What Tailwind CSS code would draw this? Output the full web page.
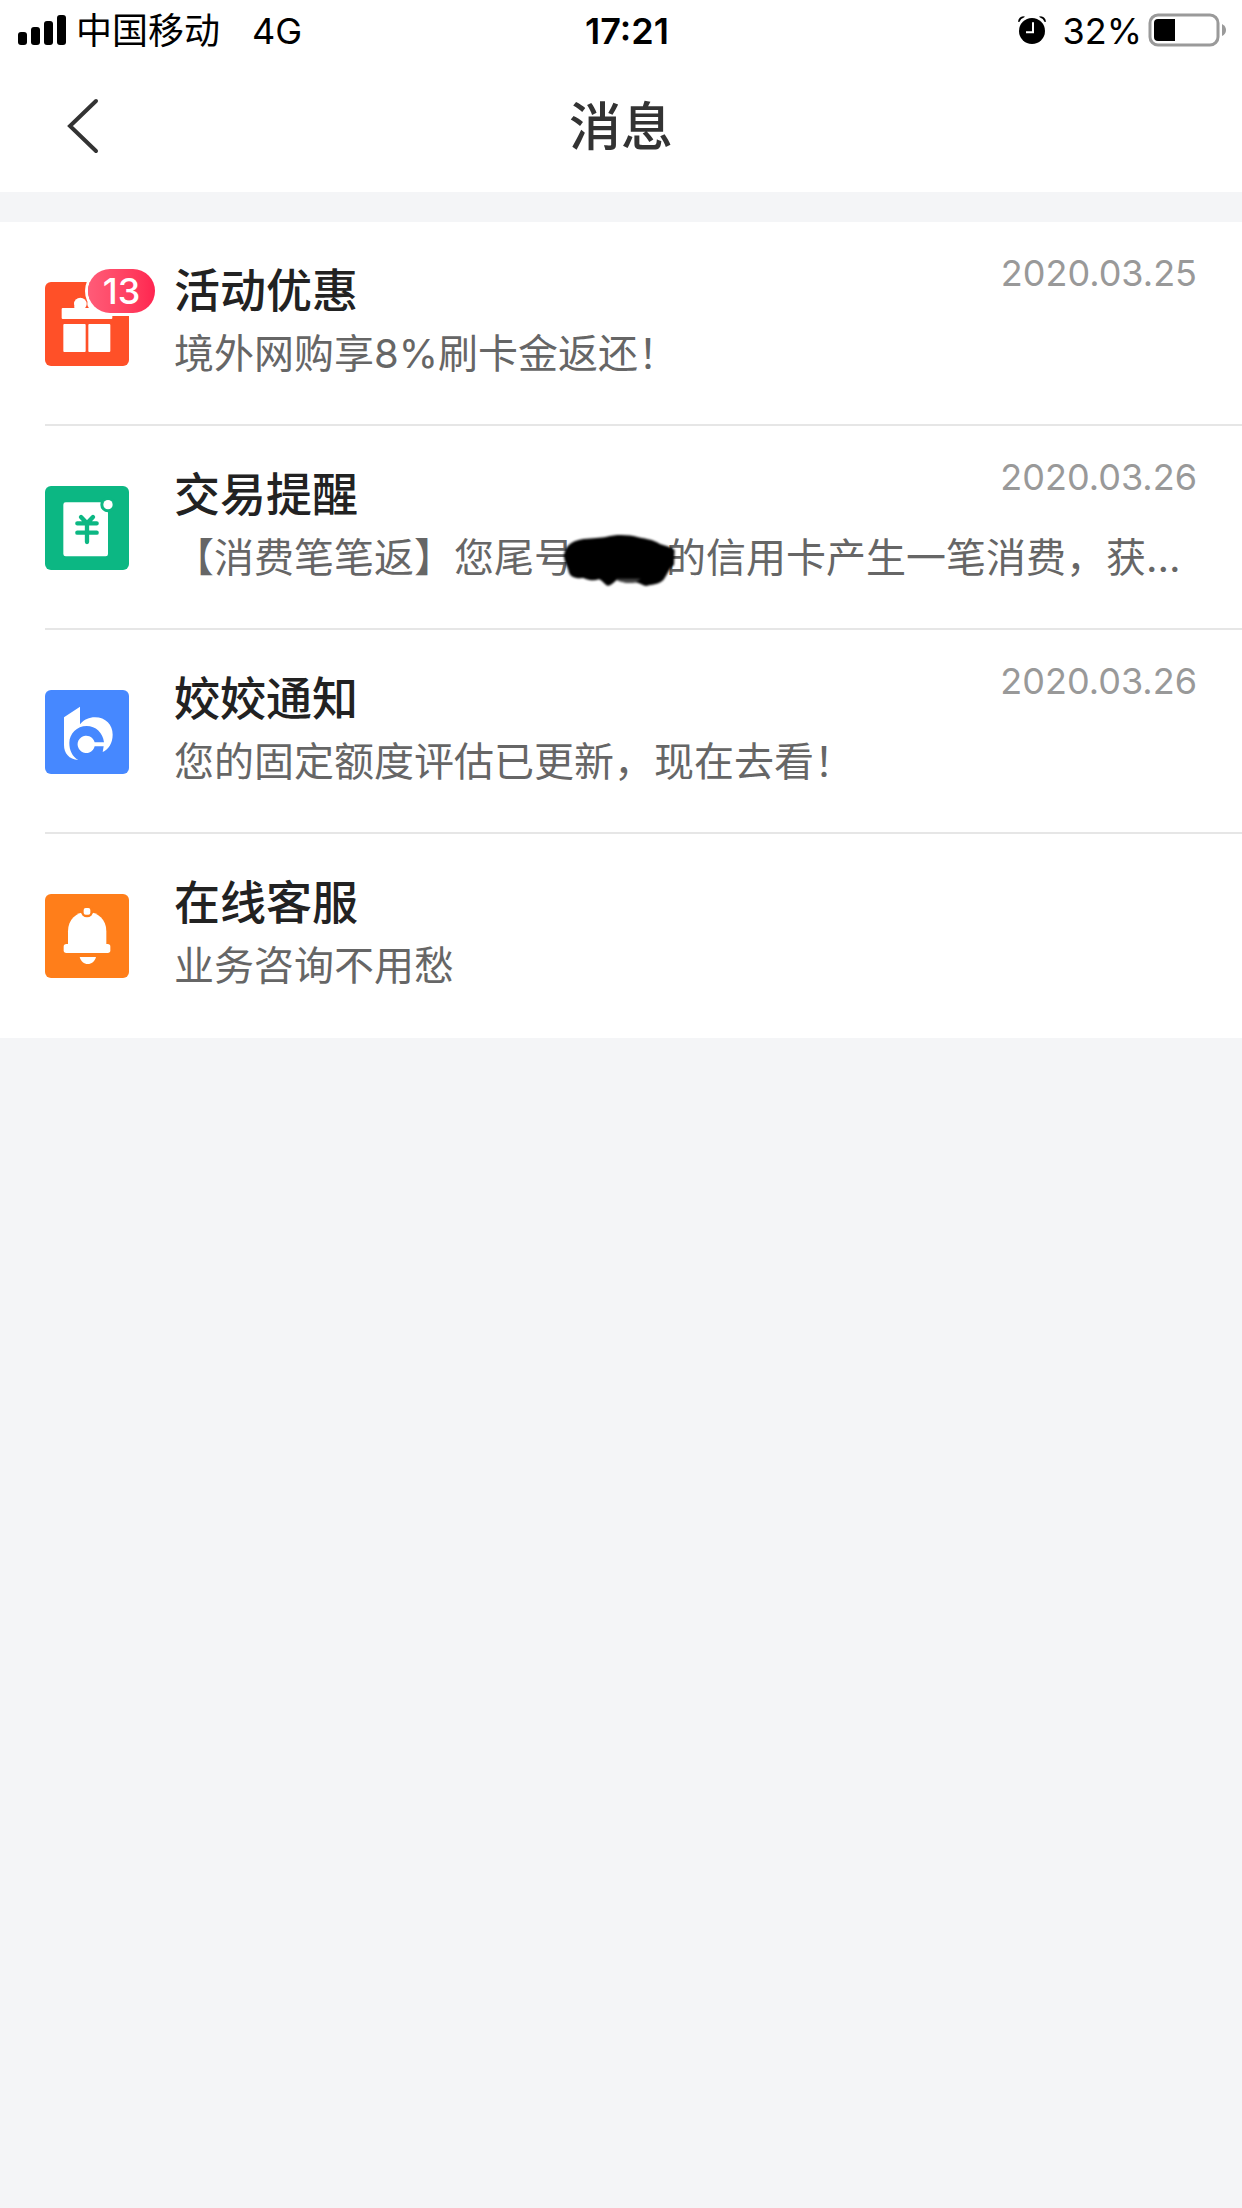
<!DOCTYPE html>
<html lang="zh-CN">
<head>
  <meta charset="UTF-8">
  <meta name="viewport" content="width=device-width, initial-scale=1.0">
  <title>消息</title>
  <script src="https://cdn.jsdelivr.net/npm/@tailwindcss/browser@4"></script>
</head>
<body class="bg-[#f4f5f7] min-h-screen font-['Inter','Noto_Sans_CJK_SC',sans-serif]">

  <!-- Status bar -->
  <div class="flex items-center h-15 bg-white pl-[18px] pr-[14px] text-4xl text-black">
    <div class="flex-1 flex items-center">
      <svg class="w-12 h-[30px] mr-[10px]" viewBox="0 0 48 30">
        <rect x="0" y="17" width="9" height="13" rx="3" />
        <rect x="13" y="12" width="9" height="18" rx="3" />
        <rect x="26" y="6" width="9" height="24" rx="3" />
        <rect x="39" y="0" width="9" height="30" rx="3" />
      </svg>
      <span class="pt-0.5">中国移动</span>
      <span class="ml-8 pt-0.5">4G</span>
    </div>
    <div class="pl-2 pt-0.5 font-semibold">17:21</div>
    <div class="flex-1 flex items-center justify-end">
      <svg class="w-7 h-7" viewBox="0 0 84 84">
        <circle cx="42" cy="45" r="39" />
        <path d="M0 17Q2 1 20 1L19 4Q8 8 4 18ZM84 17Q82 1 64 1L65 4Q76 8 80 18Z" />
        <path d="M45 19V49H24" fill="none" stroke="#fff" stroke-width="6" />
      </svg>
      <span class="ml-4 mr-1.5 pt-0.5">32%</span>
      <svg class="w-20 h-[34px]" viewBox="0 0 80 34">
        <rect x="2" y="2" width="68" height="30" rx="8" fill="#fff" stroke="#9a9a9a" stroke-width="3" />
        <path d="M27 6V28H10Q6 28 6 24V10Q6 6 10 6Z" />
        <path d="M74 11Q78 13 78 17Q78 21 74 23Z" fill="#9a9a9a" />
      </svg>
    </div>
  </div>

  <!-- Header -->
  <header class="grid grid-cols-3 items-center h-33 bg-white px-[60px]">
    <button type="button" aria-label="返回" class="w-12 h-15">
      <svg class="w-12 h-15" viewBox="0 0 48 60" fill="none" stroke="#333" stroke-width="4" stroke-linecap="round">
        <path d="M36 5L10 30L36 55" />
      </svg>
    </button>
    <h1 class="pt-1 text-center text-[52px] font-medium text-[#333]">消息</h1>
  </header>

  <!-- Message list -->
  <ul class="mt-[30px] bg-white pl-[45px]">
    <li class="border-b-2 border-[#e6e6e6]">
      <a href="#" class="flex items-start h-[202px] pt-9 pr-[45px]">
        <div class="relative shrink-0 mt-6 mr-[45px]">
          <svg class="w-21 h-21 rounded-md bg-[#ff5028]" viewBox="0 0 252 252" fill="#fff">
            <circle cx="106" cy="66" r="19" />
            <circle cx="146" cy="66" r="19" />
            <path d="M88 72L126 82L164 72V86H88Z" />
            <rect x="50" y="78" width="152" height="33" rx="3" />
            <rect x="55" y="126" width="67" height="84" rx="3" />
            <rect x="130" y="126" width="66" height="84" rx="3" />
          </svg>
          <span class="absolute left-[43px] -top-[13px] w-[67px] h-11 rounded-full ring-3 ring-white bg-linear-to-r from-[#ff5b78] to-[#ff2450] text-center text-4xl leading-11 font-medium text-white">13</span>
        </div>
        <div class="flex-1 min-w-0">
          <div class="flex items-start justify-between">
            <h2 class="text-[46px] leading-16 font-medium text-[#222]">活动优惠</h2>
            <time class="text-4xl leading-[30px] text-[#999]">2020.03.25</time>
          </div>
          <p class="text-[40px] leading-16 text-[#666] whitespace-nowrap overflow-hidden">境外网购享8%刷卡金返还！</p>
        </div>
      </a>
    </li>

    <li class="border-b-2 border-[#e6e6e6]">
      <a href="#" class="flex items-start h-[202px] pt-9 pr-[45px]">
        <div class="shrink-0 mt-6 mr-[45px]">
          <svg class="w-21 h-21 rounded-md bg-[#0cb783]" viewBox="0 0 252 252">
            <rect x="55" y="49" width="134" height="162" rx="7" fill="#fff" />
            <circle cx="189" cy="56" r="23" fill="#0cb783" />
            <circle cx="189" cy="56" r="14" fill="#fff" />
            <path d="M108 93L126 112L144 93M97 112H155M97 140H155M126 112V168" fill="none" stroke="#0cb783" stroke-width="13" stroke-linecap="round" />
          </svg>
        </div>
        <div class="flex-1 min-w-0">
          <div class="flex items-start justify-between">
            <h2 class="text-[46px] leading-16 font-medium text-[#222]">交易提醒</h2>
            <time class="text-4xl leading-[30px] text-[#999]">2020.03.26</time>
          </div>
          <p class="flex items-center text-[40px] leading-16 text-[#666] whitespace-nowrap">
            <span>【消费笔笔返】您尾号</span>
            <!-- card number is inked out -->
            <span class="relative shrink-0 w-23 h-15">
              <svg class="absolute -left-3.5 top-0.5 w-[120px] h-15 blur-[1px]" viewBox="120 90 360 180">
                <path d="M132 170C132 145 150 122 190 117C220 114 240 114 260 110C290 102 330 104 355 112C385 118 400 120 420 132C440 138 455 142 464 150L462 195C446 205 444 222 430 240C412 256 395 252 378 258C362 254 356 246 340 248C320 250 305 246 290 240C280 248 272 258 262 257C250 250 246 240 236 238C222 244 205 240 190 234C170 236 152 232 147 218C144 200 134 190 132 170Z" />
                <path d="M288 238Q318 256 352 244L362 236H288Z" fill="#444" />
              </svg>
            </span>
            <span>的信用卡产生一笔消费，获…</span>
          </p>
        </div>
      </a>
    </li>

    <li class="border-b-2 border-[#e6e6e6]">
      <a href="#" class="flex items-start h-[202px] pt-9 pr-[45px]">
        <div class="shrink-0 mt-6 mr-[45px]">
          <svg class="w-21 h-21 rounded-md bg-[#4688ff]" viewBox="0 0 252 252" fill="#fff">
            <path d="M57 82L105 50V103C118 88 132 82 150 82C182 82 203 105 203 134C203 160 190 178 173 186L176 169H149A26 26 0 1 1 149 157H177C174 128 152 108 125 108C96 108 73 131 73 159C73 182 82 200 100 210C72 208 57 190 57 165Z" />
          </svg>
        </div>
        <div class="flex-1 min-w-0">
          <div class="flex items-start justify-between">
            <h2 class="text-[46px] leading-16 font-medium text-[#222]">姣姣通知</h2>
            <time class="text-4xl leading-[30px] text-[#999]">2020.03.26</time>
          </div>
          <p class="text-[40px] leading-16 text-[#666] whitespace-nowrap overflow-hidden">您的固定额度评估已更新，现在去看！</p>
        </div>
      </a>
    </li>

    <li>
      <a href="#" class="flex items-start h-51 pt-9 pr-[45px]">
        <div class="shrink-0 mt-6 mr-[45px]">
          <svg class="w-21 h-21 rounded-md bg-[#ff7e1a]" viewBox="0 0 252 252" fill="#fff">
            <path d="M69 152V112C69 76 94 54 126 54C159 54 184 76 184 112V152Z" />
            <rect x="56" y="150" width="140" height="27" rx="8" />
            <path d="M104 189H153C149 203 140 210 128 210C117 210 108 203 104 189Z" />
            <circle cx="126" cy="51" r="19" fill="#ff7e1a" />
            <rect x="116" y="42" width="20" height="20" rx="6" />
          </svg>
        </div>
        <div class="flex-1 min-w-0">
          <h2 class="text-[46px] leading-16 font-medium text-[#222]">在线客服</h2>
          <p class="text-[40px] leading-16 text-[#666] whitespace-nowrap overflow-hidden">业务咨询不用愁</p>
        </div>
      </a>
    </li>
  </ul>

</body>
</html>
